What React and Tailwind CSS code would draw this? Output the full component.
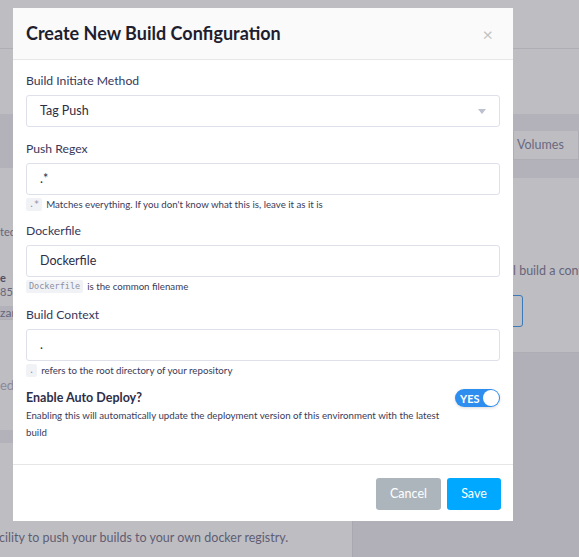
import React from "react";

const font = { fontFamily: "Lato, 'Noto Sans', sans-serif" };

function Field({ label, value, hint }) {
  return (
    <div className="flex flex-col">
      <div className="text-[12.2px] leading-[19px] text-[#37375a] mb-[5px]">{label}</div>
      <div className="h-[32px] border border-[#dfe1ea] rounded-[3px] flex items-center pl-[13px] text-[12.5px] text-[#2d2d45]">
        {value}
      </div>
      {hint && (
        <div className="mt-[2px] flex items-center gap-[4px] h-[14px] text-[9.7px] leading-[14px] text-[#3a3a58]">
          {hint}
        </div>
      )}
    </div>
  );
}

function Chip({ children }) {
  return (
    <span
      className="bg-[#f1f2f6] text-[#8b8fa3] text-[8.5px] px-[3px] h-[13px] leading-[13px] rounded-[2px]"
      style={{ fontFamily: "'DejaVu Sans Mono', monospace" }}
    >
      {children}
    </span>
  );
}

export default function App() {
  return (
    <div className="relative w-[579px] h-[557px] overflow-hidden bg-[#bebdc2] text-[#66657b]" style={font}>
      {/* background page */}
      <div className="flex flex-col h-full">
        <div className="h-[49px] border-b border-[#afaeb5] shrink-0" />
        <div className="h-[65px] shrink-0" />
        <div className="flex shrink-0">
          <div className="w-[352px] shrink-0 h-[54px] bg-[#b3b2ba]" />
          <div className="flex-1 flex flex-col">
            <div className="h-[17px] bg-[#b3b2ba]" />
            <div className="h-[29px] flex justify-end border-b border-[#aeadb4]">
              <div className="w-[66px] border-l border-r border-[#aeadb4] flex items-center pl-[3px] text-[12.5px] text-[#6a6980]">
                Volumes
              </div>
            </div>
            <div className="h-[18px] bg-[#b3b2ba]" />
          </div>
        </div>
        <div className="flex flex-1">
          <div className="w-[352px] shrink-0 flex flex-col text-[11px]">
            <div className="h-[47px]" />
            <div className="leading-[14px]">ted</div>
            <div className="h-[32px]" />
            <div className="leading-[14px] font-bold text-[#4f4e64]">e</div>
            <div className="leading-[14px]">85</div>
            <div className="h-[14px] mt-[7px] bg-[#b3b2ba] border-b border-[#aeadb4] text-[12px] leading-[14px]">zar</div>
            <div className="h-[57px]" />
            <div className="text-[13px] leading-[16px] text-[#8a899b]">ed</div>
            <div className="h-[37px]" />
            <div className="h-[13px] bg-[#b3b2ba]" />
            <div className="flex-1 flex items-end pb-[9px] text-[12.5px] text-[#5e5d74] whitespace-nowrap">
              <span className="ml-[-1px]">cility to push your builds to your own docker registry.</span>
            </div>
          </div>
          <div className="flex-1 flex flex-col border-l border-[#a9a8b0] overflow-hidden">
            <div className="h-[175px] flex flex-col border-b border-[#aeadb4]">
              <div className="h-[85px]" />
              <div className="text-[12.5px] leading-[16px] text-[#66657b] pl-[160px] whitespace-nowrap">l build a confi</div>
              <div className="h-[16px]" />
              <div className="ml-[100px] w-[70px] h-[32px] border border-[#3b79b8] rounded-[3px]" />
            </div>
            <div className="flex-1 bg-[#b1b0b8]" />
          </div>
        </div>
      </div>

      {/* modal */}
      <div className="absolute left-[13px] top-[8px] w-[500px] h-[513px] bg-white flex flex-col">
        <div className="h-[52px] bg-[#fafafa] border-b border-[#e6e6e6] flex items-center justify-between pl-[13px] pr-[20px] shrink-0">
          <div className="text-[18px] font-bold text-[#1e1e2f]">Create New Build Configuration</div>
          <div className="text-[#c2c2c2] text-[18px] leading-none mt-[1px]">×</div>
        </div>
        <div className="px-[13px] pt-[11px] flex flex-col flex-1">
          <div className="flex flex-col">
            <div className="text-[12.2px] leading-[19px] text-[#37375a] mb-[5px]">Build Initiate Method</div>
            <div className="h-[32px] border border-[#dfe1ea] rounded-[3px] flex items-center justify-between pl-[13px] pr-[13px] text-[12.5px] text-[#2d2d45]">
              <span>Tag Push</span>
              <svg width="8" height="5" viewBox="0 0 8 5"><path d="M0 0h8L4 5z" fill="#bcc0cf" /></svg>
            </div>
          </div>
          <div className="h-[12px]" />
          <Field
            label="Push Regex"
            value=".*"
            hint={<><Chip>.*</Chip><span>Matches everything. If you don't know what this is, leave it as it is</span></>}
          />
          <div className="h-[10px]" />
          <Field
            label="Dockerfile"
            value="Dockerfile"
            hint={<><Chip>Dockerfile</Chip><span>is the common filename</span></>}
          />
          <div className="h-[12px]" />
          <Field
            label="Build Context"
            value="."
            hint={<><Chip>.</Chip><span>refers to the root directory of your repository</span></>}
          />
          <div className="h-[11px]" />
          <div className="flex justify-between">
            <div className="flex flex-col w-[430px]">
              <div className="text-[12.5px] font-bold leading-[19px] text-[#2e2e48]">Enable Auto Deploy?</div>
              <div className="text-[9.7px] leading-[17px] text-[#3a3a58]">
                Enabling this will automatically update the deployment version of this environment with the latest build
              </div>
            </div>
            <div className="w-[45px] h-[18px] rounded-full bg-[#2d8ef0] flex items-center justify-between pl-[5px] pr-[1px] mt-[1px] shadow-[0_1px_3px_rgba(0,0,0,0.15)]">
              <span className="text-[11px] font-bold text-white leading-none">YES</span>
              <span className="w-[16px] h-[16px] rounded-full bg-white" />
            </div>
          </div>
        </div>
        <div className="h-[57px] border-t border-[#e6e6e6] flex items-center justify-end gap-[6px] pr-[12px] pt-[2px] shrink-0">
          <div className="w-[65px] h-[32px] rounded-[3px] bg-[#adb5bc] text-white text-[12.5px] flex items-center justify-center">Cancel</div>
          <div className="w-[54px] h-[32px] rounded-[3px] bg-[#00a8ff] text-white text-[12.5px] flex items-center justify-center">Save</div>
        </div>
      </div>
    </div>
  );
}
